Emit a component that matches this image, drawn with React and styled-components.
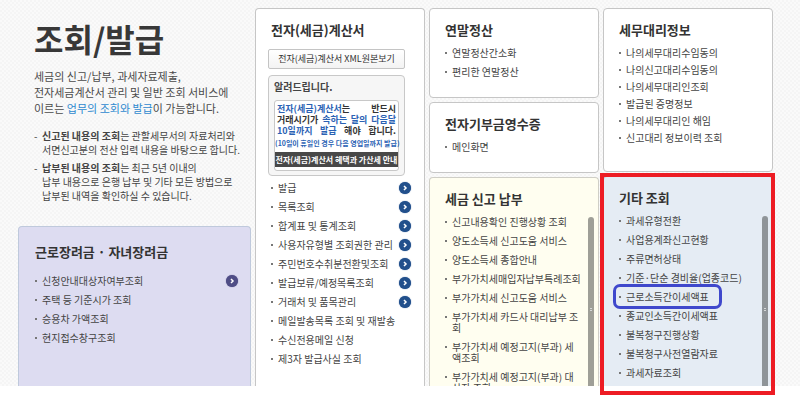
import React from 'react';
import styled, { createGlobalStyle } from 'styled-components';

const GlobalStyle = createGlobalStyle`
    * {
        box-sizing: border-box;
    }

    body {
        margin: 0;
        background: #fff;
        color: #444;
        font-family: 'Noto Sans CJK KR', sans-serif;
        font-size: 10px;
        line-height: 11px;
    }
`;

const Page = styled.main`
    padding-bottom: 18px;
`;

const Board = styled.div`
    display: grid;
    grid-template-columns: 233fr 170fr 170fr 170fr;
    gap: 4px;
    padding: 8px 27px 0 18px;
    background-color: #fafafa;
    background-image: repeating-conic-gradient(#f5f5f5 0% 25%, transparent 0% 50%);
    background-size: 4px 4px;
`;

const Column = styled.div`
    display: flex;
    flex-direction: column;
    gap: 4px;
    min-width: 0;
`;

const Intro = styled.header`
    padding: 10px 0 19px 16px;
`;

const Title = styled.h1`
    margin: 0 0 10px;
    color: #383838;
    font-size: 32px;
    font-weight: 700;
    line-height: 40px;
`;

const Lead = styled.p`
    margin: 0 0 13px;
    color: #4a4a4a;
    font-size: 11px;
    line-height: 16px;
    white-space: nowrap;
`;

const LeadLink = styled.a`
    color: #2f8ad0;
    text-decoration: none;
`;

const Notes = styled.ul`
    display: flex;
    flex-direction: column;
    gap: 4px;
    margin: 0;
    padding: 0;
    list-style: none;
    line-height: 14px;
    white-space: nowrap;
`;

const Note = styled.li`
    display: flex;

    &::before {
        content: '-';
        flex: 0 0 8px;
    }
`;

const TONES = {
    plain: { background: '#fff', border: '#c6c6c6' },
    lavender: { background: '#dddcf1', border: '#bfc9dc' },
    cream: { background: '#fffef0', border: '#cfcec6' },
    sky: { background: '#e5ecf4', border: '#b4bcc8' },
};

const Card = styled.section`
    position: relative;
    display: flex;
    flex-direction: column;
    flex: 0 0 auto;
    padding: ${(props) => props.$padding || '11px 4px 20px 15px'};
    background: ${(props) => TONES[props.$tone || 'plain'].background};
    border: 1px solid ${(props) => TONES[props.$tone || 'plain'].border};
    border-radius: 4px;
`;

// runs down to the bottom of the board
const TallCard = styled(Card)`
    flex: ${(props) => (props.$scroll ? '1 1 0px' : '1 0 auto')};
    min-height: 0;
    border-bottom: 0;
    border-radius: 4px 4px 0 0;
`;

const CardTitle = styled.h2`
    margin: 0 0 ${(props) => props.$gap || '7px'};
    color: #333;
    font-size: 13px;
    font-weight: 700;
    line-height: 20px;
    white-space: nowrap;
`;

const MenuList = styled.ul`
    display: flex;
    flex: 1;
    flex-direction: column;
    gap: ${(props) => (props.$dense ? '6px' : '8px')};
    min-width: 0;
    margin: 0;
    padding: 0;
    list-style: none;
`;

const MenuItem = styled.li`
    display: flex;
    flex-shrink: 0;

    &::before {
        content: '';
        flex: 0 0 2px;
        height: 2px;
        margin: 5px 5px 0 0;
        background: #777;
    }
`;

const MenuLink = styled.a`
    position: relative;
    flex: 1;
    color: #444;
    text-decoration: none;
    word-break: break-all;
`;

const ArrowButton = styled.button`
    display: flex;
    align-items: center;
    justify-content: center;
    flex: 0 0 12px;
    height: 12px;
    margin: 0 0 -1px;
    padding: 0;
    border: 0;
    border-radius: 50%;
    background: ${(props) => (props.$violet ? '#4f4d86' : '#22508c')};
    box-shadow: 0 0 1px ${(props) => (props.$violet ? '#4f4d86' : '#22508c')};
    color: #fff;
    cursor: pointer;
`;

const ScrollBody = styled.div`
    display: flex;
    flex: 1 1 0px;
    gap: 6px;
    min-height: 0;
    margin: -4px 0 0 -8px;
    padding: 4px 0 0 8px;
    overflow: hidden;
`;

const ScrollTrack = styled.div`
    display: flex;
    flex: 0 0 6px;
    flex-direction: column;
    align-items: center;
    justify-content: center;
    gap: 1px;
    margin-top: 1px;
    padding-top: 16px;
    border-radius: 3px 3px 0 0;
    background: ${(props) => props.$color};
`;

const Grip = styled.span`
    width: 2px;
    height: 1px;
    background: #d6d8d8;
`;

const ViewerButton = styled.button`
    height: 20px;
    margin: 2px 6px 6px 0;
    padding: 0;
    border: 1px solid #c4c4c4;
    border-radius: 2px;
    background: linear-gradient(#fff, #f3f3f3);
    color: #333;
    font-family: inherit;
    font-size: 9px;
    line-height: 16px;
    white-space: nowrap;
    cursor: pointer;
`;

const Notice = styled.div`
    margin: 0 6px 6px 0;
    padding: 4px 5px;
    border: 1px solid #c8c8c8;
    border-radius: 4px;
    background: #f6f6f6;
`;

const NoticeTitle = styled.h3`
    margin: 0 0 6px;
    color: #444;
    font-size: 10px;
    font-weight: 700;
    line-height: 14px;
`;

const NoticeBox = styled.div`
    padding-bottom: 3px;
    border: 1px solid #c8c8c8;
    border-radius: 3px;
    background: #fff;
    white-space: nowrap;
`;

const NoticeText = styled.p`
    margin: 0;
    padding: 2px;
    color: #333;
    font-size: 9px;
    font-weight: 700;
    text-align: justify;
    text-align-last: justify;
    white-space: normal;
`;

const Blue = styled.span`
    color: #2b62b4;
`;

const NoticeSmall = styled.p`
    margin: 0;
    padding-bottom: 3px;
    color: #2b62b4;
    font-size: 7px;
    font-weight: 700;
    text-align: center;
`;

const NoticeLink = styled.a`
    display: block;
    background: #484848;
    color: #fff;
    font-size: 8px;
    font-weight: 700;
    line-height: 15px;
    text-align: center;
    text-decoration: none;
`;

const Indent = styled.div`
    padding-left: 3px;
`;

const RedFrame = styled.div`
    position: absolute;
    inset: -4px -3px -9px -4px;
    border: 4px solid #ed1c24;
    pointer-events: none;
`;

const BlueRing = styled.span`
    position: absolute;
    inset: -7px auto -7px -13px;
    width: 109px;
    border: 3px solid #3f48cc;
    border-radius: 7px;
    pointer-events: none;
`;

const incentiveMenu = [
    { label: '신청안내대상자여부조회', arrow: true },
    { label: '주택 등 기준시가 조회' },
    { label: '승용차 가액조회' },
    { label: '현지접수창구조회' },
];

const invoiceMenu = [
    { label: '발급', arrow: true },
    { label: '목록조회', arrow: true },
    { label: '합계표 및 통계조회', arrow: true },
    { label: '사용자유형별 조회권한 관리', arrow: true },
    { label: '주민번호수취분전환및조회', arrow: true },
    { label: '발급보류/예정목록조회', arrow: true },
    { label: '거래처 및 품목관리', arrow: true },
    { label: '메일발송목록 조회 및 재발송' },
    { label: '수신전용메일 신청' },
    { label: '제3자 발급사실 조회' },
];

const yearEndMenu = [{ label: '연말정산간소화' }, { label: '편리한 연말정산' }];

const donationMenu = [{ label: '메인화면' }];

const taxReturnMenu = [
    { label: '신고내용확인 진행상황 조회' },
    { label: '양도소득세 신고도움 서비스' },
    { label: '양도소득세 종합안내' },
    { label: '부가가치세매입자납부특례조회' },
    { label: '부가가치세 신고도움 서비스' },
    { label: '부가가치세 카드사 대리납부 조회' },
    { label: '부가가치세 예정고지(부과) 세액조회' },
    { label: '부가가치세 예정고지(부과) 대상자 조회' },
];

const agentMenu = [
    { label: '나의세무대리수임동의' },
    { label: '나의신고대리수임동의' },
    { label: '나의세무대리인조회' },
    { label: '발급된 증명정보' },
    { label: '나의세무대리인 해임' },
    { label: '신고대리 정보이력 조회' },
];

const otherMenu = [
    { label: '과세유형전환' },
    { label: '사업용계좌신고현황' },
    { label: '주류면허상태' },
    { label: '기준·단순 경비율(업종코드)' },
    { label: '근로소득간이세액표', ringed: true },
    { label: '종교인소득간이세액표' },
    { label: '불복청구진행상황' },
    { label: '불복청구사전열람자료' },
    { label: '과세자료조회' },
];

const Menu = ({ items, dense, violet }) => (
    <MenuList $dense={dense}>
        {items.map((item) => (
            <MenuItem key={item.label}>
                <MenuLink href="#">
                    {item.label}
                    {item.ringed && <BlueRing />}
                </MenuLink>
                {item.arrow && (
                    <ArrowButton type="button" $violet={violet} aria-label={`${item.label} 펼치기`}>
                        <svg width="6" height="6" viewBox="0 0 6 6" fill="none">
                            <path d="M2 1l2 2-2 2" stroke="currentColor" strokeWidth="1.5" />
                        </svg>
                    </ArrowButton>
                )}
            </MenuItem>
        ))}
    </MenuList>
);

const ScrollMenu = ({ items, color }) => (
    <ScrollBody>
        <Menu items={items} />
        <ScrollTrack $color={color}>
            <Grip />
            <Grip />
        </ScrollTrack>
    </ScrollBody>
);

const App = () => {
    return (
        <Page>
            <GlobalStyle />
            <Board>
                <Column>
                    <Intro>
                        <Title>조회/발급</Title>
                        <Lead>
                            세금의 신고/납부, 과세자료제출,
                            <br />
                            전자세금계산서 관리 및 일반 조회 서비스에
                            <br />
                            이르는 <LeadLink href="#">업무의 조회와 발급</LeadLink>이 가능합니다.
                        </Lead>
                        <Notes>
                            <Note>
                                <div>
                                    <b>신고된 내용의 조회</b>는 관할세무서의 자료처리와
                                    <br />
                                    서면신고분의 전산 입력 내용을 바탕으로 합니다.
                                </div>
                            </Note>
                            <Note>
                                <div>
                                    <b>납부된 내용의 조회</b>는 최근 5년 이내의
                                    <br />
                                    납부 내용으로 은행 납부 및 기타 모든 방법으로
                                    <br />
                                    납부된 내역을 확인하실 수 있습니다.
                                </div>
                            </Note>
                        </Notes>
                    </Intro>
                    <TallCard $tone="lavender" $padding="15px 12px 0 16px">
                        <CardTitle $gap="13px">근로장려금 · 자녀장려금</CardTitle>
                        <Menu items={incentiveMenu} violet />
                    </TallCard>
                </Column>

                <Column>
                    <TallCard $padding="11px 13px 22px 12px">
                        <Indent>
                            <CardTitle>전자(세금)계산서</CardTitle>
                        </Indent>
                        <ViewerButton type="button">전자(세금)계산서 XML원본보기</ViewerButton>
                        <Notice>
                            <NoticeTitle>알려드립니다.</NoticeTitle>
                            <NoticeBox>
                                <NoticeText>
                                    <Blue>전자(세금)계산서</Blue>는 반드시
                                    <br />
                                    거래시기가 <Blue>속하는 달의 다음달</Blue>
                                    <br />
                                    <Blue>10일까지 발급</Blue> 해야 합니다.
                                </NoticeText>
                                <NoticeSmall>(10일이 휴일인 경우 다음 영업일까지 발급)</NoticeSmall>
                                <NoticeLink href="#">전자(세금)계산서 혜택과 가산세 안내</NoticeLink>
                            </NoticeBox>
                        </Notice>
                        <Indent>
                            <Menu items={invoiceMenu} />
                        </Indent>
                    </TallCard>
                </Column>

                <Column>
                    <Card>
                        <CardTitle>연말정산</CardTitle>
                        <Menu items={yearEndMenu} />
                    </Card>
                    <Card>
                        <CardTitle>전자기부금영수증</CardTitle>
                        <Menu items={donationMenu} />
                    </Card>
                    <TallCard $scroll $tone="cream" $padding="11px 4px 0 15px">
                        <CardTitle>세금 신고 납부</CardTitle>
                        <ScrollMenu items={taxReturnMenu} color="#9f9f97" />
                    </TallCard>
                </Column>

                <Column>
                    <Card $padding="11px 4px 28px 15px">
                        <CardTitle>세무대리정보</CardTitle>
                        <Menu items={agentMenu} dense />
                    </Card>
                    <TallCard $scroll $tone="sky" $padding="11px 4px 0 15px">
                        <CardTitle>기타 조회</CardTitle>
                        <ScrollMenu items={otherMenu} color="#8f9498" />
                        <RedFrame />
                    </TallCard>
                </Column>
            </Board>
        </Page>
    );
};

export default App;
